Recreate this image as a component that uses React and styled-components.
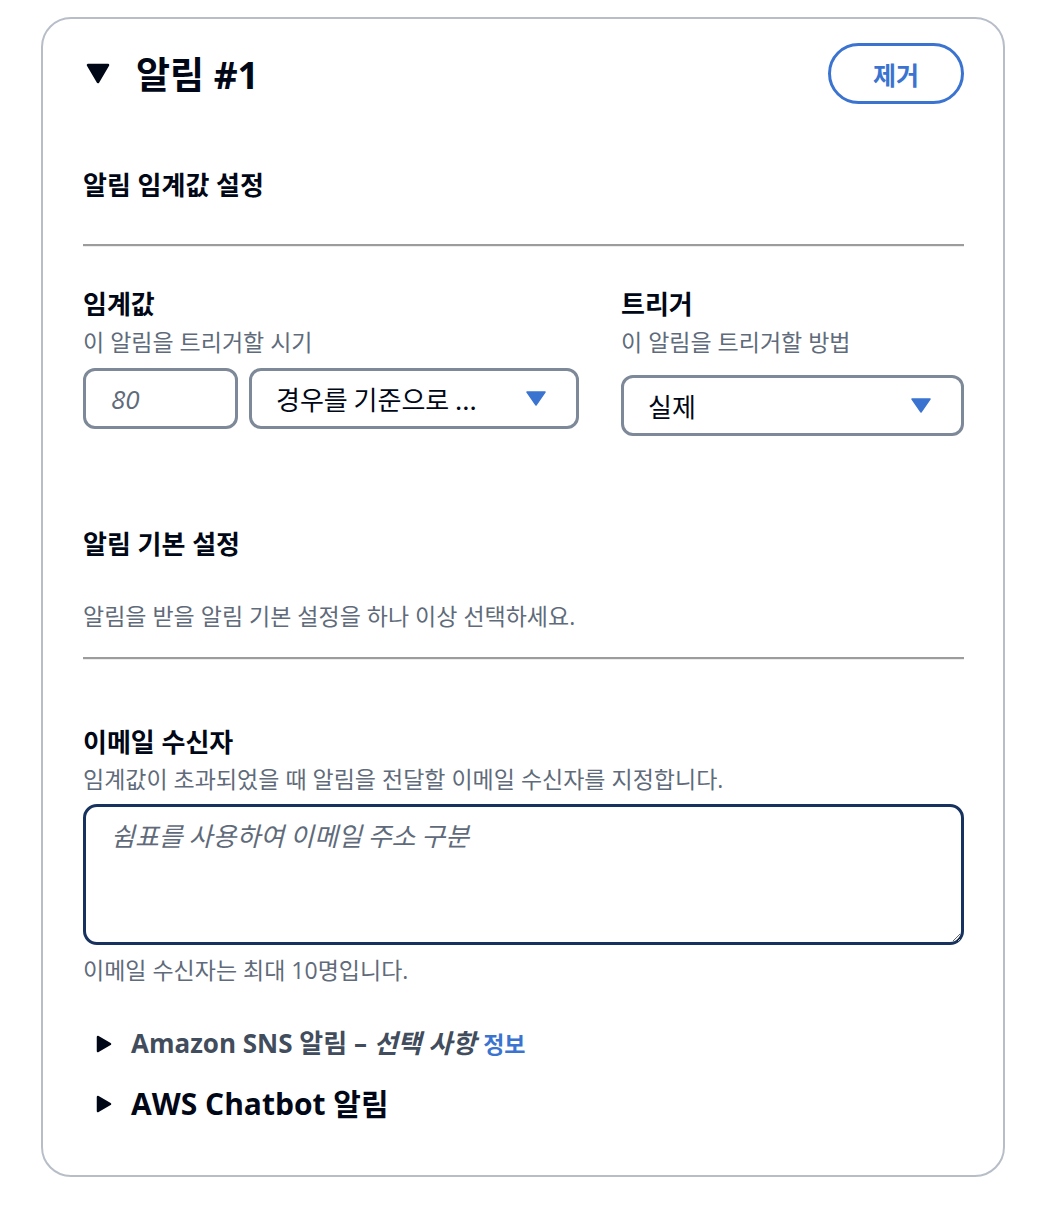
import React from "react";
import styled, { createGlobalStyle } from "styled-components";

const Global = createGlobalStyle`
  html, body { margin: 0; padding: 0; background: #ffffff; }
  body { font-family: "Open Sans", "Noto Sans CJK KR", sans-serif; color: #000716; }
  * { box-sizing: border-box; }
`;

const Page = styled.div`
  padding: 17px 45px 40px 41px;
`;

const Card = styled.section`
  border: 2px solid #b8bec8;
  border-radius: 30px;
  padding: 24px 39px 52px 40px;
  background: #fff;
`;

const Header = styled.div`
  display: flex;
  align-items: center;
  justify-content: space-between;
  height: 61px;
`;

const TitleWrap = styled.div`
  display: flex;
  align-items: center;
  gap: 26px;
  padding-left: 3px;
`;

const Title = styled.h2`
  margin: 0;
  font-size: 37px;
  font-weight: 700;
  line-height: 44px;
  color: #000716;
  padding-top: 2px;
`;

const RemoveButton = styled.button`
  width: 136px;
  height: 61px;
  border: 3px solid #3a74d0;
  border-radius: 31px;
  background: #fff;
  color: #3a74d0;
  font-family: "Noto Sans CJK KR", sans-serif;
  font-size: 25px;
  font-weight: 700;
  cursor: pointer;
`;

const SectionTitle = styled.h3`
  margin: ${(p) => p.$mt || 0}px 0 0;
  font-size: 26px;
  font-weight: 700;
  line-height: 32px;
  color: #000716;
`;

const Divider = styled.hr`
  margin: ${(p) => p.$mt || 0}px 0 0;
  border: 0;
  border-top: 2px solid #9c9c9c;
  box-shadow: 0 1px 0 #ececec;
  height: 0;
`;

const Desc = styled.p`
  margin: ${(p) => p.$mt || 0}px 0 0;
  font-size: 23px;
  line-height: 30px;
  color: #5f6b7a;
`;

const FieldGrid = styled.div`
  display: grid;
  grid-template-columns: 496px 343px;
  column-gap: 42px;
  margin-top: 42px;
`;

const Field = styled.div`
  display: flex;
  flex-direction: column;
`;

const Label = styled.label`
  font-size: 26px;
  font-weight: 700;
  line-height: 32px;
  color: #000716;
`;

const Controls = styled.div`
  display: flex;
  gap: 11px;
  margin-top: ${(p) => p.$mt || 12}px;
`;

const NumberInput = styled.input`
  width: 155px;
  height: 61px;
  border: 3px solid #7d8998;
  border-radius: 12px;
  padding: 0 0 0 25px;
  font-family: "Open Sans", "Noto Sans CJK KR", sans-serif;
  font-size: 26px;
  color: #000716;
  outline: none;
  &::placeholder { color: #5f6b7a; font-style: italic; }
`;

const Select = styled.div`
  flex: 1;
  height: 61px;
  border: 3px solid #7d8998;
  border-radius: 12px;
  display: flex;
  align-items: center;
  justify-content: space-between;
  padding: 0 30px 0 24px;
  font-family: "Noto Sans CJK KR", sans-serif;
  font-size: 26px;
  color: #000716;
`;

const SelectText = styled.span`
  white-space: nowrap;
  line-height: 32px;
`;

const Caret = () => (
  <svg width="20" height="15" viewBox="0 0 20 15" aria-hidden="true">
    <path d="M1 1 H19 L10 14 Z" fill="#3a74d0" stroke="#3a74d0" strokeWidth="1.5" strokeLinejoin="round" />
  </svg>
);

const TextArea = styled.textarea`
  display: block;
  width: 100%;
  height: 141px;
  margin-top: 10px;
  border: 3px solid #17325e;
  border-radius: 14px;
  padding: 11px 25px;
  font-family: "Noto Sans CJK KR", sans-serif;
  font-size: 26px;
  line-height: 34px;
  color: #000716;
  outline: none;
  resize: vertical;
  &::placeholder { color: #5f6b7a; font-style: italic; }
`;

const Expander = styled.div`
  display: flex;
  align-items: center;
  gap: 19px;
  padding-left: 13px;
  margin-top: ${(p) => p.$mt || 0}px;
`;

const ExpanderTitle = styled.span`
  font-size: ${(p) => (p.$large ? 30 : 26)}px;
  line-height: ${(p) => (p.$large ? 38 : 34)}px;
  font-weight: 700;
  color: ${(p) => (p.$large ? "#000716" : "#414d5c")};
  white-space: nowrap;
`;

const Em = styled.i`
  font-style: italic;
`;

const InfoLink = styled.a`
  margin-left: 7px;
  font-size: 23px;
  font-weight: 700;
  color: #3a74d0;
  text-decoration: none;
`;

const DownTriangle = () => (
  <svg width="24" height="21" viewBox="0 0 24 21" aria-hidden="true">
    <path d="M2 2 H22 L12 19 Z" fill="#000716" stroke="#000716" strokeWidth="2.5" strokeLinejoin="round" />
  </svg>
);

const RightTriangle = () => (
  <svg width="16" height="18" viewBox="0 0 16 18" aria-hidden="true">
    <path d="M2 2 L14 9 L2 16 Z" fill="#000716" stroke="#000716" strokeWidth="2.5" strokeLinejoin="round" />
  </svg>
);

export default function App() {
  return (
    <Page>
      <Global />
      <Card>
        <Header>
          <TitleWrap>
            <DownTriangle />
            <Title>알림 #1</Title>
          </TitleWrap>
          <RemoveButton>제거</RemoveButton>
        </Header>

        <SectionTitle $mt={65}>알림 임계값 설정</SectionTitle>
        <Divider $mt={43} />

        <FieldGrid>
          <Field>
            <Label>임계값</Label>
            <Desc $mt={7}>이 알림을 트리거할 시기</Desc>
            <Controls $mt={11}>
              <NumberInput placeholder="80" />
              <Select>
                <SelectText>경우를 기준으로 ...</SelectText>
                <Caret />
              </Select>
            </Controls>
          </Field>
          <Field>
            <Label>트리거</Label>
            <Desc $mt={7}>이 알림을 트리거할 방법</Desc>
            <Controls $mt={18}>
              <Select>
                <SelectText>실제</SelectText>
                <Caret />
              </Select>
            </Controls>
          </Field>
        </FieldGrid>

        <SectionTitle $mt={92}>알림 기본 설정</SectionTitle>
        <Desc $mt={41}>알림을 받을 알림 기본 설정을 하나 이상 선택하세요.</Desc>
        <Divider $mt={26} />

        <SectionTitle $mt={67}>이메일 수신자</SectionTitle>
        <Desc $mt={6}>임계값이 초과되었을 때 알림을 전달할 이메일 수신자를 지정합니다.</Desc>
        <TextArea placeholder="쉼표를 사용하여 이메일 주소 구분" />
        <Desc $mt={10}>이메일 수신자는 최대 10명입니다.</Desc>

        <Expander $mt={41}>
          <RightTriangle />
          <ExpanderTitle>
            Amazon SNS 알림 – <Em>선택 사항</Em>
            <InfoLink href="#">정보</InfoLink>
          </ExpanderTitle>
        </Expander>
        <Expander $mt={24}>
          <RightTriangle />
          <ExpanderTitle $large>AWS Chatbot 알림</ExpanderTitle>
        </Expander>
      </Card>
    </Page>
  );
}
